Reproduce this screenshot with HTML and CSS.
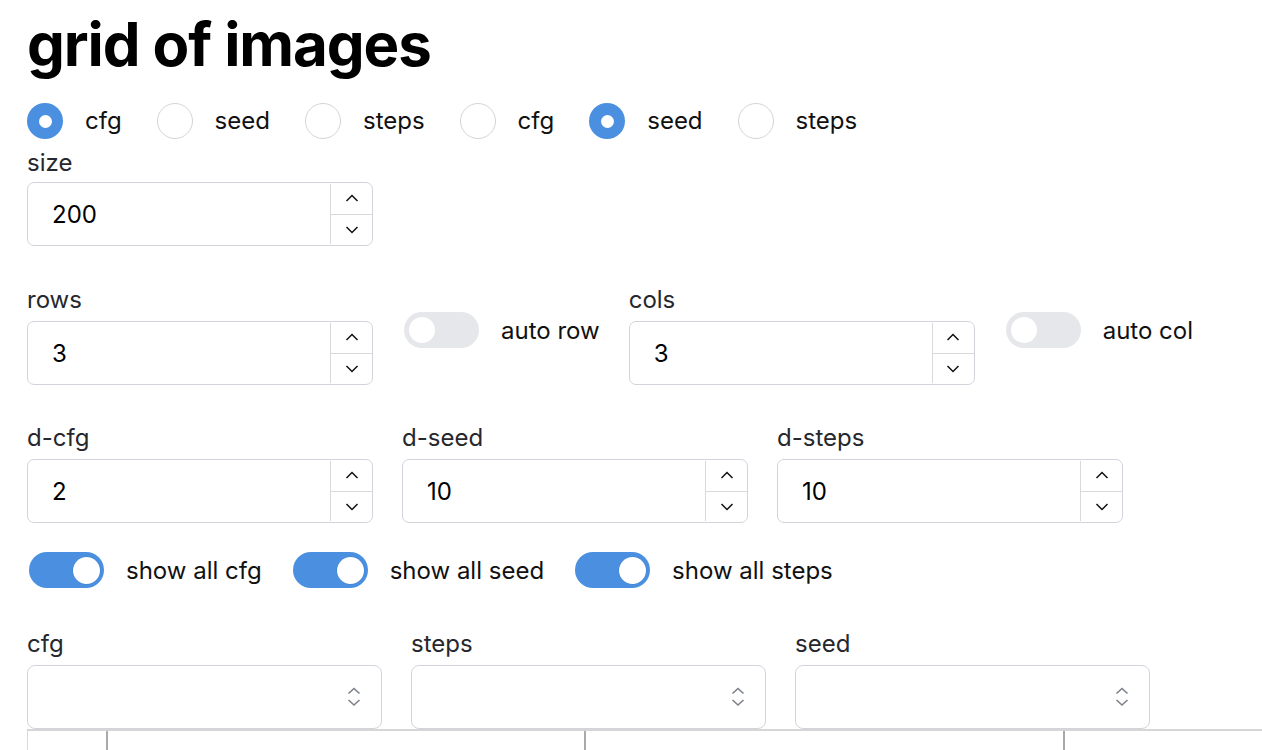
FILE: index.html
```html
<!DOCTYPE html>
<html>
<head>
<meta charset="utf-8">
<title>grid of images</title>
<link rel="stylesheet" href="styles.css">
</head>
<body>
<h1 class="title">grid of images</h1>

<div class="radios">
  <label class="radio-item"><span class="radio checked"></span><span class="radio-text">cfg</span></label>
  <label class="radio-item"><span class="radio"></span><span class="radio-text">seed</span></label>
  <label class="radio-item"><span class="radio"></span><span class="radio-text">steps</span></label>
  <label class="radio-item"><span class="radio"></span><span class="radio-text">cfg</span></label>
  <label class="radio-item"><span class="radio checked"></span><span class="radio-text">seed</span></label>
  <label class="radio-item"><span class="radio"></span><span class="radio-text">steps</span></label>
</div>

<div class="field field-size">
  <div class="field-label label-size">size</div>
  <div class="num">
    <span class="num-value">200</span>
    <span class="spin">
      <span class="spin-btn"><svg width="14" height="8" viewBox="0 0 14 8"><path d="M1.5 7 L7 1.5 L12.5 7" fill="none" stroke="#111" stroke-width="1.5"/></svg></span>
      <span class="spin-btn spin-down"><svg width="14" height="8" viewBox="0 0 14 8"><path d="M1.5 1 L7 6.5 L12.5 1" fill="none" stroke="#111" stroke-width="1.5"/></svg></span>
    </span>
  </div>
</div>

<div class="row row-rc">
  <div class="field">
    <div class="field-label">rows</div>
    <div class="num">
      <span class="num-value">3</span>
      <span class="spin">
        <span class="spin-btn"><svg width="14" height="8" viewBox="0 0 14 8"><path d="M1.5 7 L7 1.5 L12.5 7" fill="none" stroke="#111" stroke-width="1.5"/></svg></span>
        <span class="spin-btn spin-down"><svg width="14" height="8" viewBox="0 0 14 8"><path d="M1.5 1 L7 6.5 L12.5 1" fill="none" stroke="#111" stroke-width="1.5"/></svg></span>
      </span>
    </div>
  </div>
  <label class="switch-item switch-offset"><span class="switch"></span><span class="switch-text">auto row</span></label>
  <div class="field">
    <div class="field-label">cols</div>
    <div class="num">
      <span class="num-value">3</span>
      <span class="spin">
        <span class="spin-btn"><svg width="14" height="8" viewBox="0 0 14 8"><path d="M1.5 7 L7 1.5 L12.5 7" fill="none" stroke="#111" stroke-width="1.5"/></svg></span>
        <span class="spin-btn spin-down"><svg width="14" height="8" viewBox="0 0 14 8"><path d="M1.5 1 L7 6.5 L12.5 1" fill="none" stroke="#111" stroke-width="1.5"/></svg></span>
      </span>
    </div>
  </div>
  <label class="switch-item switch-offset"><span class="switch"></span><span class="switch-text">auto col</span></label>
</div>

<div class="row row-d">
  <div class="field">
    <div class="field-label">d-cfg</div>
    <div class="num">
      <span class="num-value">2</span>
      <span class="spin">
        <span class="spin-btn"><svg width="14" height="8" viewBox="0 0 14 8"><path d="M1.5 7 L7 1.5 L12.5 7" fill="none" stroke="#111" stroke-width="1.5"/></svg></span>
        <span class="spin-btn spin-down"><svg width="14" height="8" viewBox="0 0 14 8"><path d="M1.5 1 L7 6.5 L12.5 1" fill="none" stroke="#111" stroke-width="1.5"/></svg></span>
      </span>
    </div>
  </div>
  <div class="field">
    <div class="field-label">d-seed</div>
    <div class="num">
      <span class="num-value">10</span>
      <span class="spin">
        <span class="spin-btn"><svg width="14" height="8" viewBox="0 0 14 8"><path d="M1.5 7 L7 1.5 L12.5 7" fill="none" stroke="#111" stroke-width="1.5"/></svg></span>
        <span class="spin-btn spin-down"><svg width="14" height="8" viewBox="0 0 14 8"><path d="M1.5 1 L7 6.5 L12.5 1" fill="none" stroke="#111" stroke-width="1.5"/></svg></span>
      </span>
    </div>
  </div>
  <div class="field">
    <div class="field-label">d-steps</div>
    <div class="num">
      <span class="num-value">10</span>
      <span class="spin">
        <span class="spin-btn"><svg width="14" height="8" viewBox="0 0 14 8"><path d="M1.5 7 L7 1.5 L12.5 7" fill="none" stroke="#111" stroke-width="1.5"/></svg></span>
        <span class="spin-btn spin-down"><svg width="14" height="8" viewBox="0 0 14 8"><path d="M1.5 1 L7 6.5 L12.5 1" fill="none" stroke="#111" stroke-width="1.5"/></svg></span>
      </span>
    </div>
  </div>
</div>

<div class="row row-show">
  <label class="switch-item"><span class="switch on"></span><span class="switch-text">show all cfg</span></label>
  <label class="switch-item"><span class="switch on"></span><span class="switch-text">show all seed</span></label>
  <label class="switch-item"><span class="switch on"></span><span class="switch-text">show all steps</span></label>
</div>

<div class="row row-sel">
  <div class="field field-sel">
    <div class="field-label">cfg</div>
    <div class="select"><svg class="sel-icon" width="14" height="22" viewBox="0 0 14 22"><path d="M1.5 7.5 L7 2.5 L12.5 7.5 M1.5 14 L7 19 L12.5 14" fill="none" stroke="#7b8089" stroke-width="1.6"/></svg></div>
  </div>
  <div class="field field-sel">
    <div class="field-label">steps</div>
    <div class="select"><svg class="sel-icon" width="14" height="22" viewBox="0 0 14 22"><path d="M1.5 7.5 L7 2.5 L12.5 7.5 M1.5 14 L7 19 L12.5 14" fill="none" stroke="#7b8089" stroke-width="1.6"/></svg></div>
  </div>
  <div class="field field-sel">
    <div class="field-label">seed</div>
    <div class="select"><svg class="sel-icon" width="14" height="22" viewBox="0 0 14 22"><path d="M1.5 7.5 L7 2.5 L12.5 7.5 M1.5 14 L7 19 L12.5 14" fill="none" stroke="#7b8089" stroke-width="1.6"/></svg></div>
  </div>
</div>

<div class="grid-table">
  <div class="gcell gcell-first"></div>
  <div class="gcell"></div>
  <div class="gcell"></div>
  <div class="gcell"></div>
</div>
</body>
</html>
```

FILE: styles.css
```css
html, body {
  overflow: hidden;
}
body {
  margin: 0;
  padding: 8px 0 0 27px;
  font-family: Inter, "Noto Sans", "Liberation Sans", sans-serif;
  font-size: 24px;
  color: #111;
  background: #fff;
  width: 1500px;
}
.title {
  margin: 0;
  font-size: 60px;
  line-height: 72px;
  font-weight: 700;
  color: #000;
  letter-spacing: -1.1px;
}
.radios {
  display: flex;
  margin-top: 23px;
  height: 36px;
  align-items: center;
}
.radio-item {
  display: flex;
  align-items: center;
  margin-right: 35px;
}
.radio {
  width: 36px;
  height: 36px;
  box-sizing: border-box;
  border-radius: 50%;
  border: 1px solid #d1d5db;
  background: #fff;
  margin-right: 22px;
  position: relative;
}
.radio.checked {
  border: none;
  background: #4a8fe0;
}
.radio.checked::after {
  content: "";
  position: absolute;
  left: 11.5px;
  top: 11.5px;
  width: 13px;
  height: 13px;
  border-radius: 50%;
  background: #fff;
}
.radio-text {
  color: #111;
  line-height: 36px;
}
.field {
  display: flex;
  flex-direction: column;
}
.field-size {
  margin-top: 9px;
}
.field-label {
  line-height: 29px;
  color: #26282d;
  margin-bottom: 7px;
}
.label-size {
  margin-bottom: 5px;
}
.num {
  width: 346px;
  height: 64px;
  box-sizing: border-box;
  border: 1px solid #d1d5db;
  border-radius: 7px;
  display: flex;
  align-items: center;
  background: #fff;
}
.num-value {
  flex: 1;
  padding-left: 24px;
  color: #000;
}
.spin {
  width: 41px;
  height: 60px;
  border-left: 1px solid #d9d9d9;
  display: flex;
  flex-direction: column;
}
.spin-btn {
  flex: 1;
  display: flex;
  align-items: center;
  justify-content: center;
}
.spin-btn svg {
  margin-top: -2px;
}
.spin-down svg {
  margin-top: 2px;
}
.spin-down {
  border-top: 1px solid #d9d9d9;
}
.row {
  display: flex;
  gap: 29px;
  align-items: flex-start;
}
.row-rc {
  margin-top: 39px;
}
.row-d {
  margin-top: 38px;
}
.row-show {
  margin-top: 29px;
  gap: 29px;
  align-items: center;
}
.row-sel {
  margin-top: 41px;
}
.switch-item {
  display: flex;
  align-items: center;
  gap: 20px;
  height: 36px;
}
.switch-offset {
  margin-top: 27px;
}
.switch-text {
  position: relative;
  top: 1px;
}
.switch {
  width: 75px;
  height: 36px;
  margin: 0 2px;
  border-radius: 18px;
  background: #e6e7ea;
  position: relative;
  flex: none;
}
.switch::after {
  content: "";
  position: absolute;
  left: 5px;
  top: 5px;
  width: 26px;
  height: 26px;
  border-radius: 50%;
  background: #fff;
}
.switch.on {
  background: #4a8fe0;
}
.switch.on::after {
  left: auto;
  right: 4px;
  top: 4.5px;
  width: 27px;
  height: 27px;
  box-shadow: 0 0 0 0.5px rgba(0,0,0,0.08);
}
.switch-text {
  color: #111;
  line-height: 36px;
  white-space: nowrap;
}
.field-sel .field-label {
  margin-bottom: 7px;
}
.select {
  width: 355px;
  height: 64px;
  box-sizing: border-box;
  border: 1px solid #d1d5db;
  border-radius: 8px;
  display: flex;
  align-items: center;
  justify-content: flex-end;
  padding-right: 20px;
  background: #fff;
}
.grid-table {
  display: grid;
  grid-template-columns: 79px 478px 479px 479px;
  border-top: 2px solid #d6d6d6;
  height: 200px;
  margin-top: 0;
}
.gcell {
  border-left: 2px solid #a9a9a9;
}
.gcell-first {
  border-left: 1px solid #dadada;
}
```
